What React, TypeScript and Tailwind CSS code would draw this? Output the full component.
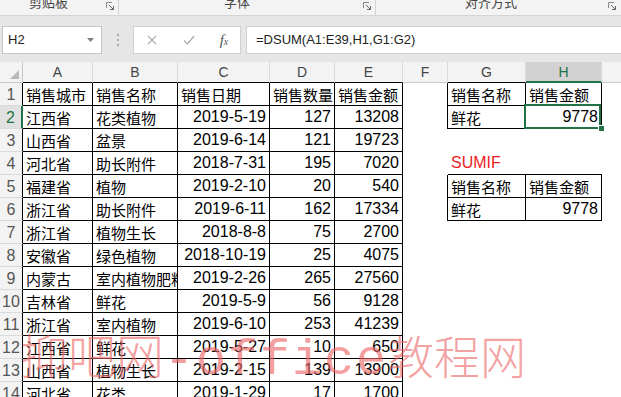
import React from "react";
import clsx from "clsx";

const DATA: string[][] = [
  ["销售城市", "销售名称", "销售日期", "销售数量", "销售金额", "", "销售名称", "销售金额"],
  ["江西省", "花类植物", "2019-5-19", "127", "13208", "", "鲜花", "9778"],
  ["山西省", "盆景", "2019-6-14", "121", "19723", "", "", ""],
  ["河北省", "助长附件", "2018-7-31", "195", "7020", "", "SUMIF", ""],
  ["福建省", "植物", "2019-2-10", "20", "540", "", "销售名称", "销售金额"],
  ["浙江省", "助长附件", "2019-6-11", "162", "17334", "", "鲜花", "9778"],
  ["浙江省", "植物生长", "2018-8-8", "75", "2700", "", "", ""],
  ["安徽省", "绿色植物", "2018-10-19", "25", "4075", "", "", ""],
  ["内蒙古", "室内植物肥料", "2019-2-26", "265", "27560", "", "", ""],
  ["吉林省", "鲜花", "2019-5-9", "56", "9128", "", "", ""],
  ["浙江省", "室内植物", "2019-6-10", "253", "41239", "", "", ""],
  ["江西省", "鲜花", "2019-5-27", "10", "650", "", "", ""],
  ["山西省", "植物生长", "2019-2-15", "139", "13900", "", "", ""],
  ["河北省", "花类", "2019-1-29", "17", "1700", "", "", ""],
];

const LETTERS = ["A", "B", "C", "D", "E", "F", "G", "H", "I"];

function Launcher() {
  return (
    <svg width="9" height="9" viewBox="0 0 9 9" className="block">
      <path d="M0.5 0.5H6M0.5 0.5V6" stroke="#8a8a8a" strokeWidth="1" fill="none" />
      <path d="M3 3L7.5 7.5M7.5 4V7.5H4" stroke="#666" strokeWidth="1" fill="none" />
    </svg>
  );
}

function Ribbon() {
  return (
    <div className="flex h-[16px] overflow-hidden border-b border-[#d4d4d4] bg-[#f3f3f3] font-['Noto_Sans_CJK_SC',sans-serif] text-[13px] text-[#444]">
      <div className="flex h-[15px] w-[119px] border-r border-[#d4d4d4]">
        <div className="flex w-[97px] justify-center">
          <span className="-mt-[6px] leading-[15px]">剪贴板</span>
        </div>
        <div className="flex-1" />
        <div className="mr-[3px] pt-[2px]">
          <Launcher />
        </div>
      </div>
      <div className="flex h-[15px] w-[257px] border-r border-[#d4d4d4]">
        <div className="flex w-[236px] justify-center">
          <span className="-mt-[6px] leading-[15px]">字体</span>
        </div>
        <div className="flex-1" />
        <div className="mr-[3px] pt-[2px]">
          <Launcher />
        </div>
      </div>
      <div className="flex h-[15px] flex-1">
        <div className="flex w-[230px] justify-center">
          <span className="-mt-[6px] leading-[15px]">对齐方式</span>
        </div>
        <div className="flex-1" />
        <div className="mr-[4px] pt-[2px]">
          <Launcher />
        </div>
      </div>
    </div>
  );
}

function FormulaBar() {
  return (
    <div className="flex h-[46px] items-start bg-[#e6e6e6] pt-[10px] font-['Liberation_Sans',sans-serif] text-[13px] text-[#222]">
      <div className="ml-[2px] flex h-[28px] w-[100px] items-center justify-between border border-[#c6c6c6] bg-white pl-[5px] pr-[7px]">
        <span>H2</span>
        <svg width="7" height="4" viewBox="0 0 7 4">
          <path d="M0 0H7L3.5 4Z" fill="#808080" />
        </svg>
      </div>
      <div className="flex h-[28px] w-[31px] flex-col items-center justify-center gap-[3px]">
        <div className="h-[2px] w-[2px] bg-[#a8a8a8]" />
        <div className="h-[2px] w-[2px] bg-[#a8a8a8]" />
        <div className="h-[2px] w-[2px] bg-[#a8a8a8]" />
      </div>
      <div className="flex h-[28px] w-[108px] items-center border border-[#d0d0d0] bg-white">
        <div className="flex w-[36px] justify-center">
          <svg width="10" height="10" viewBox="0 0 10 10">
            <path d="M1 1L9 9M9 1L1 9" stroke="#b0b0b0" strokeWidth="1.3" />
          </svg>
        </div>
        <div className="flex w-[38px] justify-center">
          <svg width="12" height="10" viewBox="0 0 12 10">
            <path d="M1 5.5L4.5 9L11 1" stroke="#b0b0b0" strokeWidth="1.4" fill="none" />
          </svg>
        </div>
        <div className="flex w-[32px] justify-center font-['Liberation_Serif',serif] text-[15px] italic text-[#555]">
          <span>
            f<span className="text-[10px]">x</span>
          </span>
        </div>
      </div>
      <div className="ml-[5px] flex h-[28px] flex-1 items-center border border-r-0 border-[#d0d0d0] bg-white pl-[9px]">
        =DSUM(A1:E39,H1,G1:G2)
      </div>
    </div>
  );
}

function isNum(s: string) {
  return /^[0-9-]+$/.test(s);
}

function Sheet() {
  const tableRows = new Set([1, 2, 5, 6]);
  return (
    <div className="grid w-[700px] grid-cols-[23px_70px_85px_92px_65px_68px_45px_78px_76px_98px]">
      {/* header row */}
      <div className="relative h-[21px] border-r border-b border-[#c8c8c8] bg-[#f3f3f3]">
        <svg width="9" height="9" viewBox="0 0 9 9" className="absolute right-[3px] bottom-[3px]">
          <path d="M9 0V9H0Z" fill="#b9b9b9" />
        </svg>
      </div>
      {LETTERS.map((l, i) => {
        const isH = l === "H";
        const blackBottom = i <= 4 || l === "G";
        return (
          <div
            key={l}
            className={clsx(
              "flex h-[21px] justify-center border-r border-r-[#dadada] pt-[2px] font-['Liberation_Sans',sans-serif] text-[14px] leading-[17px]",
              isH
                ? "border-b-2 border-b-[#217346] bg-[#d2d2d2] text-[#217346]"
                : "bg-[#f3f3f3] text-[#444]",
              !isH && blackBottom && "border-b border-b-black",
              !isH && !blackBottom && "border-b border-b-[#c8c8c8]"
            )}
          >
            {l}
          </div>
        );
      })}
      {DATA.map((row, ri) => {
        const r = ri + 1;
        const sel = r === 2;
        return (
          <React.Fragment key={r}>
            <div
              className={clsx(
                "flex h-[23px] justify-center border-b border-b-[#dadada] pt-[2px] font-['Liberation_Sans',sans-serif] text-[16px] leading-[20px]",
                sel
                  ? "border-r-2 border-r-[#217346] bg-[#e1e1e1] text-[#217346]"
                  : "border-r border-r-black bg-[#f3f3f3] text-[#555]"
              )}
            >
              {r}
            </div>
            {[0, 1, 2, 3, 4, 5, 6, 7, 8].map((ci) => {
              const v = ci < 8 ? row[ci] : "";
              const inMain = ci <= 4;
              const inSide = (ci === 6 || ci === 7) && tableRows.has(r);
              const fRight = ci === 5 && tableRows.has(r);
              const sideTop = (ci === 6 || ci === 7) && r === 4;
              const br = inMain || inSide || fRight;
              const bb = inMain || inSide || sideTop;
              const num = v !== "" && isNum(v);
              const red = v === "SUMIF";
              const isH2 = r === 2 && ci === 7;
              return (
                <div
                  key={ci}
                  className={clsx(
                    "relative flex h-[23px] overflow-visible whitespace-nowrap",
                    br && "border-r border-r-black",
                    bb && "border-b border-b-black",
                    num ? "justify-end pr-[3px]" : "justify-start pl-[3px]"
                  )}
                >
                  <div className="w-full overflow-hidden">
                    <div
                      className={clsx(
                        num || red
                          ? "font-['Liberation_Sans',sans-serif] text-[16px] leading-[22px]"
                          : "pt-[1px] font-['Noto_Sans_CJK_SC',sans-serif] text-[15px] leading-[21px]",
                        num ? "text-right" : "text-left",
                        red ? "text-[#ee1c25]" : "text-black"
                      )}
                    >
                      {v}
                    </div>
                  </div>
                  {isH2 && (
                    <>
                      <div className="pointer-events-none absolute top-[-2px] left-[-2px] h-[25px] w-[77px] border-2 border-[#217346]" />
                      <div className="pointer-events-none absolute right-[-4px] bottom-[-4px] h-[7px] w-[7px] border border-white bg-[#217346]" />
                    </>
                  )}
                </div>
              );
            })}
          </React.Fragment>
        );
      })}
    </div>
  );
}

function Watermark() {
  return (
    <div className="pointer-events-none absolute top-[329px] left-[20px] flex items-baseline whitespace-nowrap text-[rgba(236,100,100,0.62)]">
      <span className="font-['Noto_Sans_CJK_SC',sans-serif] text-[48px] leading-none font-light">抑吧网</span>
      <span className="font-['Liberation_Mono',monospace] text-[50px] leading-none tracking-[2px]">-office</span>
      <span className="font-['Noto_Sans_CJK_SC',sans-serif] text-[46px] leading-none font-light">教程网</span>
    </div>
  );
}

export default function App() {
  return (
    <div className="relative h-[397px] w-[621px] overflow-hidden bg-white">
      <Ribbon />
      <FormulaBar />
      <Sheet />
      <Watermark />
    </div>
  );
}
